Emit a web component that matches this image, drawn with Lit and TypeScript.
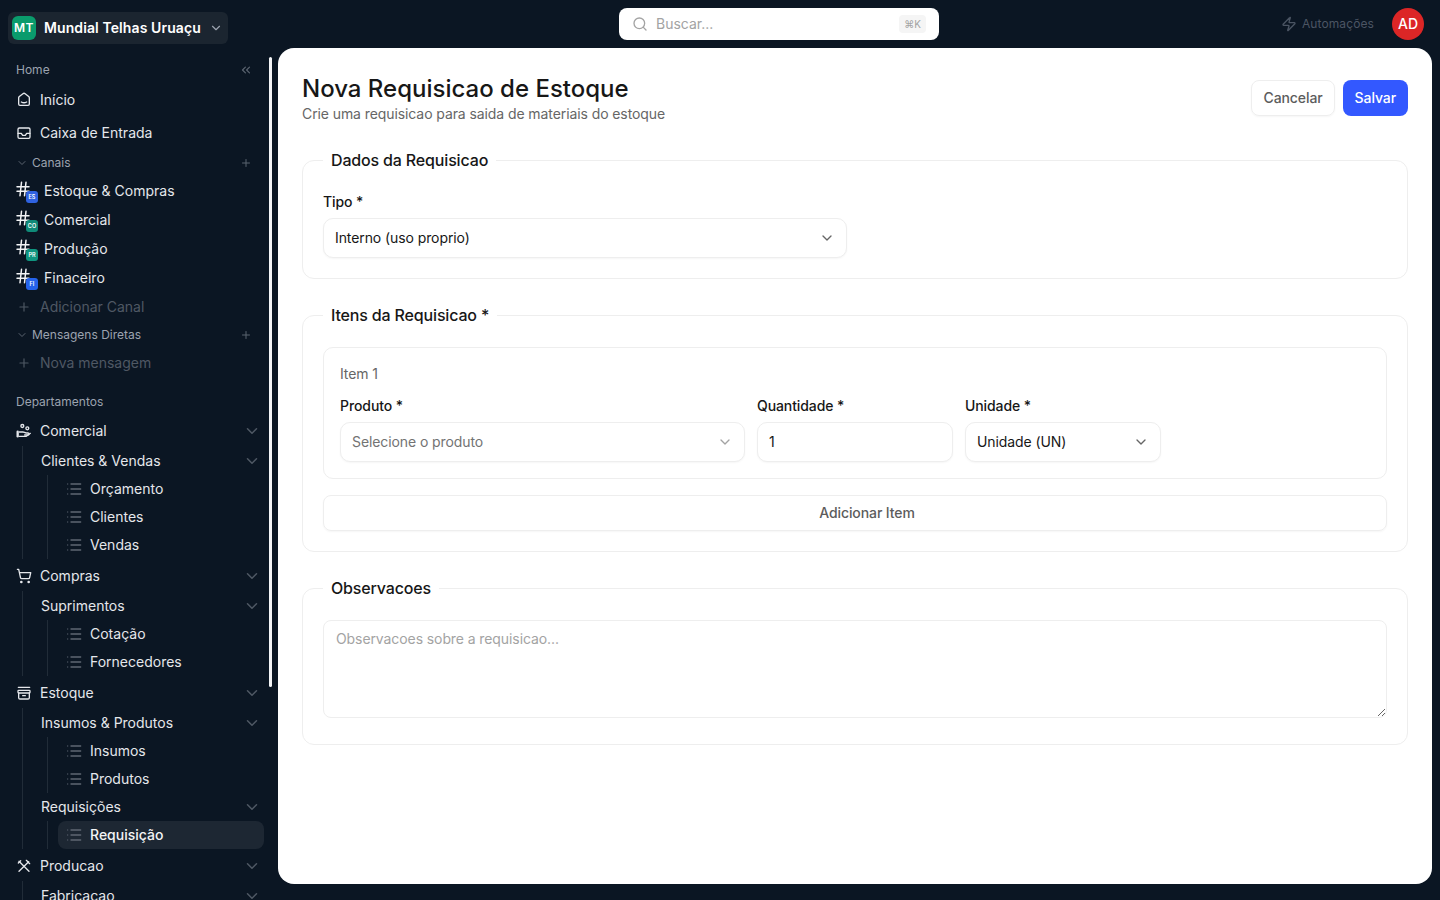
import { LitElement, html, svg, css } from 'lit';
import { customElement } from 'lit/decorators.js';

const ICONS = {
  house: svg`<path d="M19 6.7 13.7 2.6a2.7 2.7 0 0 0-3.3 0L5 6.7a2.7 2.7 0 0 0-1 2.1v9.2a2 2 0 0 0 2 2h12a2 2 0 0 0 2-2V8.8c0-.8-.4-1.6-1-2.1"/><path d="M16 15c-2.2 1.3-5.8 1.3-8 0"/>`,
  inbox: svg`<rect x="3" y="4.5" width="18" height="15.5" rx="2"/><path d="M21 12.5h-5l-2 3h-4l-2-3H3"/>`,
  chevronsLeft: svg`<path d="m11 17-5-5 5-5"/><path d="m18 17-5-5 5-5"/>`,
  chevron: svg`<path d="m6 9 6 6 6-6"/>`,
  plus: svg`<path d="M5 12h14"/><path d="M12 5v14"/>`,
  hash: svg`<line x1="4" x2="20" y1="9" y2="9"/><line x1="4" x2="20" y1="15" y2="15"/><line x1="10" x2="8" y1="3" y2="21"/><line x1="16" x2="14" y1="3" y2="21"/>`,
  list: svg`<path d="M2.5 4.5h.01M2.5 12h.01M2.5 19.5h.01" opacity="0.8"/><path d="M7.5 4.5H22M7.5 12H22M7.5 19.5H22"/>`,
  coins: svg`<circle cx="9.5" cy="4.5" r="2.2"/><circle cx="17" cy="8" r="2.2"/><path d="M2.5 13v7" stroke-width="3.5"/><path d="M5 13.5h5.5c2 0 2.5 1.5 5 1.5h2.5a1.5 1.5 0 0 1 0 3h-5"/><path d="M5 20h10.5l6-4.5"/>`,
  cart: svg`<circle cx="8" cy="21" r="1"/><circle cx="19" cy="21" r="1"/><path d="M2.05 2.05h2l2.66 12.42a2 2 0 0 0 2 1.58h9.78a2 2 0 0 0 1.95-1.57l1.65-7.43H5.12"/>`,
  archive: svg`<path d="M3.5 3.5h17"/><rect x="3" y="8" width="18" height="4" rx="1"/><path d="M4 12v7a2 2 0 0 0 2 2h12a2 2 0 0 0 2-2v-7"/><path d="M10 16h4"/>`,
  tools: svg`<path d="M19 5.5 4.5 20"/><path d="m15.5 3.5 5 5"/><path d="M4.5 5 19.5 20"/><path d="M3.5 7.5 7 4"/>`,
  search: svg`<circle cx="11" cy="11" r="8"/><path d="m21 21-4.3-4.3"/>`,
  zap: svg`<path d="M4 14a1 1 0 0 1-.78-1.63l9.9-10.2a.5.5 0 0 1 .86.46l-1.92 6.02A1 1 0 0 0 13 10h7a1 1 0 0 1 .78 1.63l-9.9 10.2a.5.5 0 0 1-.86-.46l1.92-6.02A1 1 0 0 0 11 14z"/>`,
};

type IconName = keyof typeof ICONS;

interface Leaf {
  label: string;
  active?: boolean;
}

interface SubGroup {
  label: string;
  leaves: Leaf[];
}

interface Department {
  label: string;
  icon: IconName;
  groups: SubGroup[];
}

const CHANNELS = [
  { label: 'Estoque & Compras', code: 'ES', color: '#2f62e0' },
  { label: 'Comercial', code: 'CO', color: '#0f8a78' },
  { label: 'Produção', code: 'PR', color: '#0f9580' },
  { label: 'Finaceiro', code: 'FI', color: '#2563eb' },
];

const DEPARTMENTS: Department[] = [
  {
    label: 'Comercial',
    icon: 'coins',
    groups: [
      {
        label: 'Clientes & Vendas',
        leaves: [{ label: 'Orçamento' }, { label: 'Clientes' }, { label: 'Vendas' }],
      },
    ],
  },
  {
    label: 'Compras',
    icon: 'cart',
    groups: [
      {
        label: 'Suprimentos',
        leaves: [{ label: 'Cotação' }, { label: 'Fornecedores' }],
      },
    ],
  },
  {
    label: 'Estoque',
    icon: 'archive',
    groups: [
      {
        label: 'Insumos & Produtos',
        leaves: [{ label: 'Insumos' }, { label: 'Produtos' }],
      },
      {
        label: 'Requisições',
        leaves: [{ label: 'Requisição', active: true }],
      },
    ],
  },
  {
    label: 'Producao',
    icon: 'tools',
    groups: [{ label: 'Fabricacao', leaves: [] }],
  },
];

function icon(name: IconName, size = 16, cls = '') {
  return html`<svg
    class="icon ${cls}"
    width=${size}
    height=${size}
    viewBox="0 0 24 24"
    fill="none"
    stroke="currentColor"
    stroke-width="2"
    stroke-linecap="round"
    stroke-linejoin="round"
  >
    ${ICONS[name]}
  </svg>`;
}

@customElement('app-root')
export class AppRoot extends LitElement {
  static styles = css`
    * {
      box-sizing: border-box;
    }

    :host {
      display: block;
      height: 900px;
      overflow: hidden;
      background: #0b1623;
      font-family: Inter, 'Liberation Sans', sans-serif;
      font-size: 14px;
      line-height: 20px;
      color: #171717;
    }

    .icon {
      display: block;
      flex: none;
    }

    /* top bar */
    .topbar {
      display: flex;
      height: 48px;
    }

    .topbar-left {
      flex: none;
      width: 619px;
      padding: 12px 0 0 8px;
    }

    .workspace {
      display: flex;
      align-items: center;
      width: 220px;
      height: 32px;
      padding: 0 5px 0 4px;
      border-radius: 6px;
      background: #1b2530;
      color: #fff;
    }

    .workspace-logo {
      display: flex;
      align-items: center;
      justify-content: center;
      width: 24px;
      height: 24px;
      border-radius: 6px;
      background: #0a9b6c;
      font-size: 12px;
      font-weight: 600;
      letter-spacing: 0.4px;
    }

    .workspace-name {
      flex: 1;
      margin-left: 8px;
      font-weight: 600;
      letter-spacing: 0.1px;
      white-space: nowrap;
    }

    .workspace .icon {
      color: #9ca3af;
    }

    .search {
      display: flex;
      align-items: center;
      flex: none;
      width: 320px;
      height: 32px;
      margin-top: 8px;
      padding: 0 13px 0 13px;
      border-radius: 8px;
      background: #fff;
      color: #a3a3a3;
    }

    .search-text {
      flex: 1;
      margin-left: 8px;
    }

    .kbd {
      display: flex;
      align-items: center;
      justify-content: center;
      width: 27px;
      height: 18px;
      border-radius: 4px;
      background: #f5f5f5;
      font-size: 10px;
    }

    .topbar-right {
      display: flex;
      align-items: center;
      justify-content: flex-end;
      flex: 1;
      height: 48px;
      padding: 0 16px 0 0;
    }

    .automations {
      display: flex;
      align-items: center;
      gap: 5px;
      margin: 0 18px 0 0;
      color: #4b5563;
      font-size: 12px;
      letter-spacing: 0.1px;
    }

    .avatar {
      display: flex;
      align-items: center;
      justify-content: center;
      width: 32px;
      height: 32px;
      border-radius: 50%;
      background: #dc2626;
      color: #fff;
      font-weight: 500;
    }

    /* body */
    .body {
      display: flex;
      height: 852px;
    }

    .sidebar {
      position: relative;
      flex: none;
      width: 278px;
      height: 852px;
      overflow: hidden;
      padding: 8px 14px 0 0;
      color: #e5e7eb;
    }

    .scroll-thumb {
      position: absolute;
      top: 9px;
      left: 269px;
      width: 3px;
      height: 630px;
      border-radius: 2px;
      background: #f3f4f6;
    }

    .row {
      display: flex;
      align-items: center;
      gap: 8px;
      white-space: nowrap;
    }

    .section-label {
      justify-content: space-between;
      height: 28px;
      padding: 0 11px 0 16px;
      color: #9ca3af;
      font-size: 12px;
    }

    .dim {
      color: #5b6470;
    }

    .nav-main {
      height: 32px;
      padding-left: 16px;
    }

    .nav-main + .nav-main {
      margin-top: 1px;
    }

    .collapsible {
      gap: 4px;
      height: 28px;
      padding: 0 12px 0 16px;
      color: #9ca3af;
      font-size: 12px;
    }

    .collapsible .grow {
      flex: 1;
    }

    .channel {
      position: relative;
      gap: 10px;
      height: 28px;
      margin-bottom: 1px;
      padding-left: 16px;
    }

    .hash {
      position: relative;
      width: 18px;
      height: 28px;
    }

    .hash .icon {
      position: absolute;
      top: 3px;
      left: -2px;
      color: #f3f4f6;
    }

    .badge {
      position: absolute;
      top: 14px;
      left: 10px;
      width: 12px;
      height: 12px;
      border-radius: 3px;
      color: #fff;
      font-size: 5.5px;
      font-weight: 600;
      line-height: 12px;
      text-align: center;
    }

    .muted-action {
      gap: 9px;
      height: 28px;
      padding-left: 17px;
      color: #4f5864;
    }

    .departments {
      margin-top: 11px;
    }

    .dept-head {
      justify-content: space-between;
      height: 30px;
      padding: 0 3px 0 16px;
    }

    .dept-title {
      display: flex;
      align-items: center;
      gap: 8px;
    }

    .chev {
      color: #4f5864;
    }

    .dept-body {
      margin: 0 0 2px 22px;
      padding: 1px 0 0 18px;
      border-left: 1px solid #212c38;
    }

    .group-head {
      justify-content: space-between;
      height: 28px;
      padding-right: 3px;
    }

    .leaves {
      margin-left: 6px;
      padding-left: 10px;
      border-left: 1px solid #212c38;
    }

    .leaf {
      height: 28px;
      padding-left: 8px;
      border-radius: 8px;
    }

    .leaf .icon {
      color: #5f6773;
    }

    .leaf.active {
      background: #1d2733;
      font-weight: 500;
      color: #f3f4f6;
    }

    /* main panel */
    .panel {
      flex: none;
      width: 1154px;
      height: 836px;
      padding: 24px;
      border-radius: 16px;
      background: #fff;
      letter-spacing: -0.09px;
    }

    .page-head {
      display: flex;
      justify-content: space-between;
      margin-bottom: 24px;
    }

    h1 {
      margin: 0;
      padding-top: 1px;
      font-size: 24px;
      font-weight: 500;
      line-height: 31px;
      letter-spacing: 0;
    }

    .subtitle {
      margin: 0;
      color: #666;
    }

    .actions {
      display: flex;
      gap: 8px;
      padding-top: 8px;
    }

    .btn {
      display: flex;
      align-items: center;
      justify-content: center;
      height: 36px;
      padding: 0 11px;
      border-radius: 8px;
      font-weight: 500;
    }

    .btn-outline {
      border: 1px solid #eee;
      color: #5c5c5c;
      box-shadow: 0 1px 2px rgba(0, 0, 0, 0.04);
    }

    .btn-primary {
      padding: 0 12px;
      background: #3358ff;
      color: #fff;
    }

    fieldset {
      min-width: 0;
      margin: 0 0 24px;
      padding: 20px;
      border: 1px solid #eee;
      border-radius: 12px;
    }

    legend {
      margin-left: 0;
      padding: 0 8px;
      font-size: 16px;
      font-weight: 500;
      line-height: 24px;
      letter-spacing: -0.16px;
    }

    .field-label {
      display: block;
      margin-bottom: 6px;
      font-weight: 500;
    }

    .control {
      display: flex;
      align-items: center;
      justify-content: space-between;
      width: 100%;
      height: 40px;
      padding: 0 11px;
      border: 1px solid #eee;
      border-radius: 10px;
      background: #fff;
      box-shadow: 0 1px 2px rgba(0, 0, 0, 0.04);
      font: inherit;
      letter-spacing: inherit;
      color: #171717;
    }

    input.control {
      padding-bottom: 1px;
    }

    .control .icon {
      color: #666;
    }

    .control.placeholder {
      color: #737373;
    }

    .control.placeholder .icon {
      color: #a3a3a3;
    }

    .type-field {
      width: 524px;
    }

    .item-card {
      margin-bottom: 16px;
      padding: 16px;
      border: 1px solid #eee;
      border-radius: 10px;
    }

    .item-title {
      margin-bottom: 12px;
      color: #666;
    }

    .item-grid {
      display: grid;
      grid-template-columns: 405px 196px 196px;
      gap: 12px;
    }

    .add-item {
      width: 100%;
      padding-left: 35px;
      color: #5c5c5c;
    }

    textarea {
      display: block;
      width: 100%;
      height: 98px;
      padding: 8px 12px;
      border: 1px solid #eee;
      border-radius: 8px;
      outline: none;
      font: inherit;
      letter-spacing: inherit;
      color: #171717;
    }

    textarea::placeholder {
      color: #a3a3a3;
    }

    .notes {
      padding-bottom: 26px;
    }
  `;

  render() {
    return html`
      ${this._renderTopbar()}
      <div class="body">
        ${this._renderSidebar()}
        <main class="panel">
          <div class="page-head">
            <div>
              <h1>Nova Requisicao de Estoque</h1>
              <p class="subtitle">Crie uma requisicao para saida de materiais do estoque</p>
            </div>
            <div class="actions">
              <div class="btn btn-outline">Cancelar</div>
              <div class="btn btn-primary">Salvar</div>
            </div>
          </div>

          <fieldset>
            <legend>Dados da Requisicao</legend>
            <div class="type-field">
              <label class="field-label">Tipo *</label>
              ${this._renderSelect('Interno (uso proprio)')}
            </div>
          </fieldset>

          <fieldset>
            <legend>Itens da Requisicao *</legend>
            <div class="item-card">
              <div class="item-title">Item 1</div>
              <div class="item-grid">
                <div>
                  <label class="field-label">Produto *</label>
                  ${this._renderSelect('Selecione o produto', true)}
                </div>
                <div>
                  <label class="field-label">Quantidade *</label>
                  <input class="control" .value=${'1'} />
                </div>
                <div>
                  <label class="field-label">Unidade *</label>
                  ${this._renderSelect('Unidade (UN)')}
                </div>
              </div>
            </div>
            <div class="btn btn-outline add-item">Adicionar Item</div>
          </fieldset>

          <fieldset class="notes">
            <legend>Observacoes</legend>
            <textarea placeholder="Observacoes sobre a requisicao..."></textarea>
          </fieldset>
        </main>
      </div>
    `;
  }

  private _renderTopbar() {
    return html`
      <header class="topbar">
        <div class="topbar-left">
          <div class="workspace">
            <div class="workspace-logo">MT</div>
            <div class="workspace-name">Mundial Telhas Uruaçu</div>
            ${icon('chevron', 14)}
          </div>
        </div>
        <div class="search">
          ${icon('search', 16)}
          <div class="search-text">Buscar...</div>
          <div class="kbd">⌘K</div>
        </div>
        <div class="topbar-right">
          <div class="automations">${icon('zap', 16)} Automações</div>
          <div class="avatar">AD</div>
        </div>
      </header>
    `;
  }

  private _renderSidebar() {
    return html`
      <aside class="sidebar">
        <div class="row section-label">
          <span>Home</span>
          <span class="dim">${icon('chevronsLeft', 14)}</span>
        </div>
        <div class="row nav-main">${icon('house')} Início</div>
        <div class="row nav-main">${icon('inbox')} Caixa de Entrada</div>
        ${this._renderCollapsible('Canais')}
        ${CHANNELS.map(
          channel => html`
            <div class="row channel">
              <div class="hash">
                ${icon('hash', 18)}
                <div class="badge" style="background:${channel.color}">${channel.code}</div>
              </div>
              ${channel.label}
            </div>
          `
        )}
        <div class="row muted-action">${icon('plus', 14)} Adicionar Canal</div>
        ${this._renderCollapsible('Mensagens Diretas')}
        <div class="row muted-action">${icon('plus', 14)} Nova mensagem</div>
        <div class="row section-label departments">Departamentos</div>
        ${DEPARTMENTS.map(dept => this._renderDepartment(dept))}
        <div class="scroll-thumb"></div>
      </aside>
    `;
  }

  private _renderCollapsible(label: string) {
    return html`
      <div class="row collapsible">
        <span class="dim">${icon('chevron', 12)}</span>
        <span class="grow">${label}</span>
        <span class="dim">${icon('plus', 12)}</span>
      </div>
    `;
  }

  private _renderDepartment(dept: Department) {
    return html`
      <div class="row dept-head">
        <div class="dept-title">${icon(dept.icon)} ${dept.label}</div>
        ${icon('chevron', 18, 'chev')}
      </div>
      <div class="dept-body">
        ${dept.groups.map(
          group => html`
            <div class="row group-head">${group.label} ${icon('chevron', 18, 'chev')}</div>
            ${group.leaves.length
              ? html`<div class="leaves">
                  ${group.leaves.map(
                    leaf => html`
                      <div class="row leaf ${leaf.active ? 'active' : ''}">
                        ${icon('list')} ${leaf.label}
                      </div>
                    `
                  )}
                </div>`
              : ''}
          `
        )}
      </div>
    `;
  }

  private _renderSelect(value: string, placeholder = false) {
    return html`
      <div class="control ${placeholder ? 'placeholder' : ''}">
        <span>${value}</span>
        ${icon('chevron', 16)}
      </div>
    `;
  }
}
